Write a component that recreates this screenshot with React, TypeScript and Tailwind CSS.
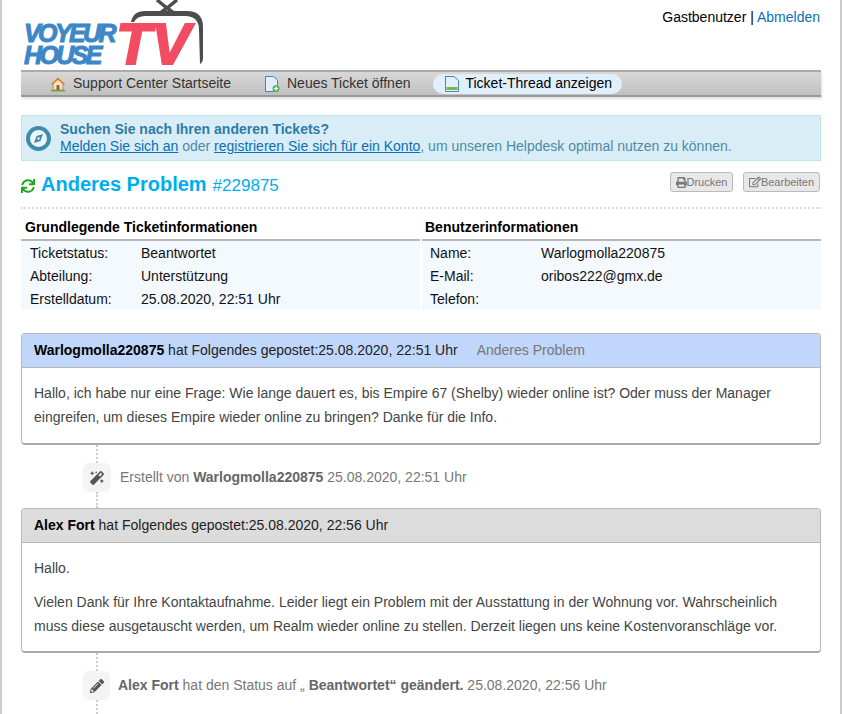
import { FaMagic, FaPencilAlt, FaSync, FaPrint, FaRegEdit } from "react-icons/fa";

const labelRows = [
  ["Ticketstatus:", "Beantwortet"],
  ["Abteilung:", "Unterstützung"],
  ["Erstelldatum:", "25.08.2020, 22:51 Uhr"],
];

const userRows = [
  ["Name:", "Warlogmolla220875"],
  ["E-Mail:", "oribos222@gmx.de"],
  ["Telefon:", ""],
];

function Logo() {
  return (
    <div className="relative h-[70px] w-[210px]">
      <svg className="absolute left-[104px] top-0" width="82" height="66" viewBox="0 0 82 66">
        <path d="M32 0 L42 8 L52 0 M42 8 L34 14 M42 8 L50 14" stroke="#4d4d4d" strokeWidth="3.5" fill="none" />
        <path d="M6 22 Q8 11 20 11 L62 11 Q78 11 78 27 L78 58 Q78 62 75 64 L74 30 Q74 16 60 16 L20 16 Q12 16 9 22 Z" fill="#4d4d4d" />
      </svg>
      <div className="absolute left-[3px] top-[22px] text-[25px] font-bold italic leading-[22px] tracking-[-2.6px] text-[#3d87c9] [-webkit-text-stroke:1px_#3d87c9] font-['Liberation_Sans',Arial,sans-serif]">
        <div>VOYEUR</div>
        <div>HOUSE</div>
      </div>
      <div className="absolute left-[95px] top-[15px] text-[58px] font-bold italic leading-[58px] text-[#f24c62] [-webkit-text-stroke:2px_#f24c62] font-['Liberation_Sans',Arial,sans-serif]">
        TV
      </div>
    </div>
  );
}

function HouseIcon() {
  return (
    <svg width="16" height="16" viewBox="0 0 16 16">
      <path d="M3 8 V14 H13 V8 L8 3 Z" fill="#f1e3c4" stroke="#b58a4a" />
      <path d="M0.5 8.5 L8 1.5 L15.5 8.5 L13.5 8.5 L8 4 L2.5 8.5 Z" fill="#d9822b" />
      <rect x="6.5" y="9" width="3" height="5" fill="#8a6a3a" />
      <rect x="1" y="14" width="14" height="1.5" fill="#6aa84f" />
    </svg>
  );
}

function NewTicketIcon() {
  return (
    <svg width="16" height="16" viewBox="0 0 16 16">
      <path d="M1.5 0.5 H9.5 L13.5 4 V15.5 H1.5 Z" fill="#e3effb" stroke="#4f81bd" />
      <circle cx="12" cy="12.5" r="3.5" fill="#5cb85c" />
      <path d="M12 10.5 V14.5 M10 12.5 H14" stroke="#fff" strokeWidth="1.2" />
    </svg>
  );
}

function ThreadIcon() {
  return (
    <svg width="16" height="16" viewBox="0 0 16 16">
      <path d="M1.5 0.5 H10 L14.5 4.5 V15.5 H1.5 Z" fill="#e3effb" stroke="#4f81bd" />
      <rect x="2.5" y="11" width="11" height="3" fill="#7fb24c" />
    </svg>
  );
}

function CompassIcon() {
  return (
    <svg width="25" height="25" viewBox="0 0 25 25" className="mr-[9px] shrink-0">
      <circle cx="12.5" cy="12.5" r="10.5" fill="#eef6fa" stroke="#3f8bb0" strokeWidth="4" />
      <path d="M17 8 L14.5 15 L8 17 L10.5 10 Z" fill="#3f8bb0" />
      <circle cx="12.5" cy="12.5" r="1.2" fill="#eef6fa" />
    </svg>
  );
}

function TimelineStem({ h }: { h: string }) {
  return <div className={`ml-[75px] w-0 border-l-2 border-dotted border-[#ccc] ${h}`} />;
}

function InfoTable({ title, rows, headPad, rowPad }: { title: string; rows: string[][]; headPad: string; rowPad: string }) {
  return (
    <div className="flex-1">
      <div className={`h-[32px] border-b-2 border-[#b8b8b8] pt-[10px] text-[14px] font-bold leading-4 text-black ${headPad}`}>{title}</div>
      <div className={`h-[69px] bg-[#f4f9fe] pt-[1px] ${rowPad}`}>
        {rows.map((r) => (
          <div key={r[0]} className="flex h-[23px] items-center text-[14px] text-[#111]">
            <span className="w-[111px]">{r[0]}</span>
            <span>{r[1]}</span>
          </div>
        ))}
      </div>
    </div>
  );
}

export default function App() {
  return (
    <div className="h-[714px] overflow-hidden border-x-2 border-[#ccc] bg-white px-[19px] font-['Liberation_Sans',Arial,sans-serif] text-[14px] text-[#333]">
      {/* Header */}
      <div className="flex h-[70px] items-start justify-between">
        <Logo />
        <div className="pr-px pt-[7px] text-[14px] text-black">
          Gastbenutzer | <a className="text-[#0a6fb5]">Abmelden</a>
        </div>
      </div>

      {/* Nav */}
      <div className="flex h-[27px] items-center border-t-2 border-b-2 border-t-[#aaa] border-b-[#999] bg-gradient-to-b from-[#d8d8d8] to-[#c0c0c0] pl-[29px] shadow-[1px_2px_2px_rgba(0,0,0,0.12)]">
        <div className="flex items-center gap-[7px] text-[14px] text-[#333]">
          <HouseIcon />
          Support Center Startseite
        </div>
        <div className="ml-[33px] flex items-center gap-[7px] text-[14px] text-[#333]">
          <NewTicketIcon />
          Neues Ticket öffnen
        </div>
        <div className="ml-[23px] flex h-[20px] items-center gap-[5px] rounded-[10px] bg-[#dff0fc] pl-[11px] pr-[10px] text-[14px] text-black">
          <ThreadIcon />
          Ticket-Thread anzeigen
        </div>
      </div>

      {/* Notice */}
      <div className="mt-[18px] flex h-[46px] items-center border border-[#bfe6f2] bg-[#d9edf7] pl-[4px] text-[14px] text-[#4d8aa8]">
        <CompassIcon />
        <div className="pb-[1px] leading-[16px]">
          <div className="mb-[1px] font-bold text-[#2f7ba8]">Suchen Sie nach Ihren anderen Tickets?</div>
          <div>
            <a className="text-[#0a6fb5] underline">Melden Sie sich an</a> oder{" "}
            <a className="text-[#0a6fb5] underline">registrieren Sie sich für ein Konto</a>, um unseren Helpdesk optimal nutzen zu können.
          </div>
        </div>
      </div>

      {/* Title */}
      <div className="mt-[11px] flex h-[26px] items-start justify-between">
        <div className="flex h-[25px] items-baseline">
          <FaSync size={14} className="mr-[6px] translate-y-[2px] text-[#1fa81f]" />
          <span className="text-[20px] font-bold leading-6 text-[#00aeef]">Anderes Problem</span>
          <span className="ml-[6px] text-[17px] leading-6 text-[#00aeef]">#229875</span>
        </div>
        <div className="mr-px flex gap-[10px]">
          <div className="flex h-[20px] w-[63px] items-center justify-center rounded-[3px] border border-[#bbb] bg-[#e8e8e8] text-[11px] text-[#777]">
            <FaPrint size={11} />
            Drucken
          </div>
          <div className="flex h-[20px] w-[77px] items-center justify-center rounded-[3px] border border-[#bbb] bg-[#e8e8e8] text-[11px] text-[#777]">
            <FaRegEdit size={12} />
            Bearbeiten
          </div>
        </div>
      </div>
      <div className="mt-[9px] border-t-2 border-dotted border-[#ddd]" />

      {/* Info tables */}
      <div className="flex gap-[2px]">
        <InfoTable title="Grundlegende Ticketinformationen" rows={labelRows} headPad="pl-1" rowPad="pl-[9px]" />
        <InfoTable title="Benutzerinformationen" rows={userRows} headPad="pl-[3px]" rowPad="pl-2" />
      </div>

      {/* First entry */}
      <div className="mt-[23px] overflow-hidden rounded-[4px] border border-[#b8b8b8] border-b-2 border-b-[#aaa]">
        <div className="flex h-[34px] items-center border-b border-[#b8b8b8] bg-[#c0d6fb] pl-3 text-[14px] text-[#222]">
          <span>
            <b className="text-black">Warlogmolla220875</b> hat Folgendes gepostet:25.08.2020, 22:51 Uhr
          </span>
          <span className="ml-[19px] text-[#777]">Anderes Problem</span>
        </div>
        <div className="h-[75px] px-3 pt-[13px] text-[14px] leading-[24px] text-[#444]">
          Hallo, ich habe nur eine Frage: Wie lange dauert es, bis Empire 67 (Shelby) wieder online ist? Oder muss der Manager eingreifen, um dieses Empire wieder online zu bringen? Danke für die Info.
        </div>
      </div>

      <TimelineStem h="h-[18px]" />
      <div className="ml-[62px] flex h-[29px] items-center text-[14px] text-[#777]">
        <div className="mr-[9px] flex h-[29px] w-[28px] items-center justify-center rounded-[6px] bg-[#f4f4f4]">
          <FaMagic size={14} className="text-[#555]" />
        </div>
        <span>
          Erstellt von <b className="text-[#666]">Warlogmolla220875</b> 25.08.2020, 22:51 Uhr
        </span>
      </div>
      <TimelineStem h="h-[16px]" />

      {/* Second entry */}
      <div className="overflow-hidden rounded-[4px] border border-[#b8b8b8] border-b-2 border-b-[#aaa]">
        <div className="flex h-[34px] items-center border-b border-[#b8b8b8] bg-[#dcdcdc] pl-3 text-[14px] text-[#222]">
          <span>
            <b className="text-black">Alex Fort</b> hat Folgendes gepostet:25.08.2020, 22:56 Uhr
          </span>
        </div>
        <div className="h-[108px] px-3 pt-[13px] text-[14px] text-[#444]">
          <p className="leading-[24px]">Hallo.</p>
          <p className="mt-[10px] leading-[24px]">
            Vielen Dank für Ihre Kontaktaufnahme. Leider liegt ein Problem mit der Ausstattung in der Wohnung vor. Wahrscheinlich muss diese ausgetauscht werden, um Realm wieder online zu stellen. Derzeit liegen uns keine Kostenvoranschläge vor.
          </p>
        </div>
      </div>

      <TimelineStem h="h-[18px]" />
      <div className="ml-[62px] flex h-[29px] items-center text-[14px] text-[#777]">
        <div className="mr-[8px] flex h-[29px] w-[27px] items-center justify-center rounded-[6px] bg-[#f4f4f4]">
          <FaPencilAlt size={14} className="text-[#555]" />
        </div>
        <span>
          <b className="text-[#666]">Alex Fort</b> hat den Status auf „ <b className="text-[#666]">Beantwortet“ geändert.</b> 25.08.2020, 22:56 Uhr
        </span>
      </div>
      <TimelineStem h="h-[18px]" />
    </div>
  );
}
